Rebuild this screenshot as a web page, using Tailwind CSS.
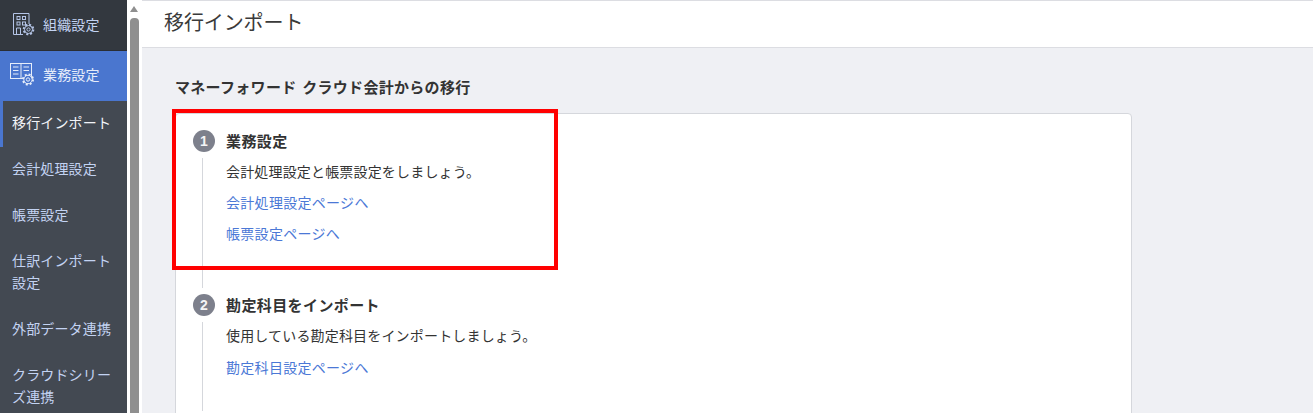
<!DOCTYPE html>
<html lang="ja"><head><meta charset="utf-8"><script src="https://cdn.jsdelivr.net/npm/@tailwindcss/browser@4"></script></head>
<body class="w-[1313px] h-[413px] overflow-hidden bg-[#eff0f4] text-[#333] font-['Noto_Sans_CJK_JP','Noto_Sans',sans-serif]">
<div class="flex h-[413px] overflow-hidden relative">
  <aside class="w-[127px] shrink-0 bg-[#434952] text-[14px] leading-[22px] tracking-[0.15px] text-[#c3d3f2] overflow-hidden">
    <div class="h-[51px] bg-[#33383f] border-b border-[#2a2e34] flex items-center pl-[12px] gap-[8px] pb-[3px]">
      <svg class="w-[23px] h-[24px] shrink-0" viewBox="0 0 23 24" fill="none" stroke="#b4c4e6" stroke-width="1"><path d="M11 22.5H1.5V1.5H17V12"/><rect x="5" y="4.5" width="3" height="3"/><rect x="10.5" y="4.5" width="3" height="3"/><rect x="5" y="10" width="3" height="3"/><rect x="10.5" y="10" width="3" height="3"/><path d="M4.5 22.5V16H8.5V22.5"/><circle cx="16.5" cy="17.5" r="4.8" stroke-width="2" stroke-dasharray="2 1.77"/><circle cx="16.5" cy="17.5" r="4"/><circle cx="16.5" cy="17.5" r="1.6"/></svg>
      <span>組織設定</span>
    </div>
    <div class="h-[50px] bg-[#4a76cf] text-[#e6edfa] flex items-center pl-[10px] gap-[8px] pb-[5px]">
      <svg class="w-[25px] h-[24px] shrink-0" viewBox="0 0 25 24" fill="none" stroke="#e6edfa" stroke-width="1"><rect x="0.5" y="1.5" width="21" height="15"/><path d="M11 1.5V16.5M3 5H8.5M3 8.5H8.5M3 12H8.5M13.5 5H19M13.5 8.5H19"/><circle cx="18" cy="17.5" r="4.2" fill="#4a76cf"/><circle cx="18" cy="17.5" r="5" stroke-width="2" stroke-dasharray="2 1.93"/><circle cx="18" cy="17.5" r="1.7"/></svg>
      <span>業務設定</span>
    </div>
    <nav>
      <a class="block pt-[10px] pb-[14px] pl-[9px] pr-[10px] border-l-[3px] border-[#4a76cf] text-[#f2f4f8]">移行インポート</a>
      <a class="block pt-[10px] pb-[14px] pl-[12px] pr-[10px]">会計処理設定</a>
      <a class="block pt-[10px] pb-[14px] pl-[12px] pr-[10px]">帳票設定</a>
      <a class="block pt-[10px] pb-[14px] pl-[12px] pr-[10px]">仕訳インポート設定</a>
      <a class="block pt-[10px] pb-[14px] pl-[12px] pr-[10px]">外部データ連携</a>
      <a class="block pt-[10px] pb-[14px] pl-[12px] pr-[10px]">クラウドシリーズ連携</a>
    </nav>
  </aside>
  <div class="w-[15px] shrink-0 bg-white pl-[3px] pt-[6px]">
    <div class="w-0 h-0 border-x-[4.5px] border-x-transparent border-b-[6px] border-b-[#8f8f8f]"></div>
    <div class="w-[9px] h-[395px] mt-[6px] bg-[#8f8f8f] rounded-t-[4px]"></div>
  </div>
  <main class="flex-1 min-w-0">
    <header class="h-[48px] bg-white border-t border-b border-[#dcdde2] pl-[22px] text-[20px] leading-[41px] tracking-[-0.1px] text-[#3a3a3a]">移行インポート</header>
    <section class="pl-[33px] pt-[28px] w-[990px]">
      <h2 class="text-[15px] leading-[22px] font-bold mb-[15px] text-[#333] tracking-[0.3px] [word-spacing:2px]">マネーフォワード クラウド会計からの移行</h2>
      <div class="bg-white border border-[#d5d7dc] rounded-t-[4px] pt-[16px] pl-[17px] h-[320px] text-[14px] leading-[22px] tracking-[0.17px]">
        <div class="relative pl-[33px] h-[164px]">
          <div class="absolute left-[9px] top-[28px] bottom-[6px] w-px bg-[#d5d7dc]"></div>
          <div class="absolute left-0 top-0 w-[22px] h-[22px] rounded-full bg-[#7d808c] text-[#f4f4f6] text-[14px] font-['Liberation_Sans'] font-bold leading-[22px] text-center">1</div>
          <h3 class="text-[15px] font-bold leading-[22px] mb-[8px] tracking-[0.4px]">業務設定</h3>
          <p class="mb-[9px]">会計処理設定と帳票設定をしましょう。</p>
          <a class="block text-[#4b78d6] mb-[9px] tracking-[0.3px]">会計処理設定ページへ</a>
          <a class="block text-[#4b78d6] tracking-[0.3px]">帳票設定ページへ</a>
        </div>
        <div class="relative pl-[33px]">
          <div class="absolute left-[9px] top-[28px] h-[89px] w-px bg-[#d5d7dc]"></div>
          <div class="absolute left-0 top-0 w-[22px] h-[22px] rounded-full bg-[#7d808c] text-[#f4f4f6] text-[14px] font-['Liberation_Sans'] font-bold leading-[22px] text-center">2</div>
          <h3 class="text-[15px] font-bold leading-[22px] mb-[8px] tracking-[0.4px]">勘定科目をインポート</h3>
          <p class="mb-[10px]">使用している勘定科目をインポートしましょう。</p>
          <a class="block text-[#4b78d6] tracking-[0.3px]">勘定科目設定ページへ</a>
        </div>
      </div>
    </section>
  </main>
  <div class="absolute left-[172px] top-[109px] w-[386px] h-[161px] border-[4px] border-[#ff0000]"></div>
</div>
</body></html>
